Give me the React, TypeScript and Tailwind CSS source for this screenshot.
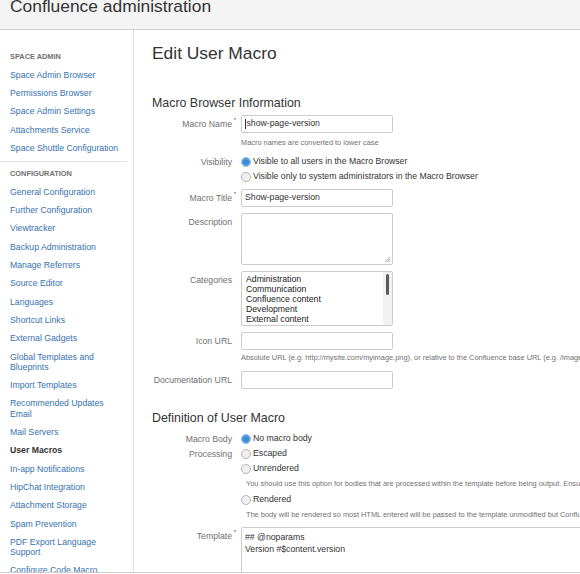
import React from 'react'

const FONT = "font-['Liberation_Sans',Arial,sans-serif]"

const spaceAdmin = [
  'Space Admin Browser',
  'Permissions Browser',
  'Space Admin Settings',
  'Attachments Service',
  'Space Shuttle Configuration',
]

const configuration = [
  'General Configuration',
  'Further Configuration',
  'Viewtracker',
  'Backup Administration',
  'Manage Referrers',
  'Source Editor',
  'Languages',
  'Shortcut Links',
  'External Gadgets',
  'Global Templates and Blueprints',
  'Import Templates',
  'Recommended Updates Email',
  'Mail Servers',
  'User Macros',
  'In-app Notifications',
  'HipChat Integration',
  'Attachment Storage',
  'Spam Prevention',
  'PDF Export Language Support',
  'Configure Code Macro',
]

function NavHeading({ children }: { children: React.ReactNode }) {
  return (
    <div className="py-[4px] text-[7.4px] font-bold uppercase leading-[10.3px] text-[#707070]">
      {children}
    </div>
  )
}

function NavItem({ children, active = false }: { children: React.ReactNode; active?: boolean }) {
  return (
    <a
      href="#"
      className={`block py-[4px] pr-[6px] text-[8.7px] leading-[10.3px] ${
        active ? 'font-bold text-[#333]' : 'text-[#3572b0]'
      }`}
    >
      {children}
    </a>
  )
}

function Label({ children, required = false, top = 'pt-[4.35px]' }: { children: React.ReactNode; required?: boolean; top?: string }) {
  return (
    <div className={`w-[80px] shrink-0 text-right text-[8.7px] leading-[10.3px] text-[#707070] ${top}`}>
      <span className="relative">
        {children}
        {required && (
          <span className="absolute -right-[4px] -top-[2px] text-[6px] leading-none text-[#555]">*</span>
        )}
      </span>
    </div>
  )
}

function Row({ children, className = '' }: { children: React.ReactNode; className?: string }) {
  return <div className={`flex gap-[9px] ${className}`}>{children}</div>
}

function TextBox({ value = '', caret = false }: { value?: string; caret?: boolean }) {
  return (
    <div className="flex h-[18px] w-[152px] items-center rounded-[2px] border border-[#ccc] bg-white pl-[3px] text-[8.7px] text-[#333]">
      {caret && <span className="mr-[0.5px] h-[10px] w-px bg-[#333]" />}
      {value}
    </div>
  )
}

function Help({ children, indent = false }: { children: React.ReactNode; indent?: boolean }) {
  return (
    <div className={`whitespace-nowrap text-[7.4px] leading-[9px] text-[#707070] ${indent ? 'pl-[5px]' : ''}`}>
      {children}
    </div>
  )
}

function Radio({ label, checked = false }: { label: string; checked?: boolean }) {
  return (
    <div className="flex h-[15px] items-center gap-[2px] whitespace-nowrap text-[8.7px] text-[#333]">
      {checked ? (
        <span className="h-[10px] w-[10px] rounded-full border border-[#8fbbe6] bg-[#3b8bd6] shadow-[inset_0_0_0_1px_#6aa8e2]" />
      ) : (
        <span className="h-[10px] w-[10px] rounded-full border border-[#b5b5b5] bg-[#f0f0f0]" />
      )}
      <span>{label}</span>
    </div>
  )
}

function Grip() {
  return (
    <svg className="absolute bottom-[1px] right-[1px]" width="7" height="7" viewBox="0 0 7 7">
      <path d="M6 1L1 6M6 3L3 6M6 5L5 6" stroke="#999" strokeWidth="0.8" />
    </svg>
  )
}

export default function App() {
  const categories = ['Administration', 'Communication', 'Confluence content', 'Development', 'External content', 'Formatting']

  return (
    <div className={`${FONT} h-[574px] w-[580px] overflow-hidden bg-white text-[#333]`}>
      {/* Header */}
      <header className="h-[30px] overflow-hidden border-b border-[#cfcfcf] bg-[#f4f4f4] pl-[10px]">
        <h1 className="-mt-[2.5px] text-[17.4px] leading-[17.4px] text-[#333]">Confluence administration</h1>
      </header>

      <div className="flex h-[543px] border-b border-[#cccccc]">
        {/* Sidebar */}
        <aside className="w-[134px] shrink-0 overflow-hidden border-r border-[#dddddd] pl-[10px] pt-[17.6px]">
          <NavHeading>Space Admin</NavHeading>
          {spaceAdmin.map(i => (
            <NavItem key={i}>{i}</NavItem>
          ))}
          <div className="-ml-[10px] mr-[6px] mb-[2.6px] mt-[3.6px] h-px bg-[#e2e2e2]" />
          <NavHeading>Configuration</NavHeading>
          {configuration.map(i => (
            <NavItem key={i} active={i === 'User Macros'}>
              {i}
            </NavItem>
          ))}
        </aside>

        {/* Main */}
        <main className="flex-1 overflow-hidden pl-[18px] pt-[12.5px]">
          <h2 className="text-[17.4px] leading-[20px] text-[#333]">Edit User Macro</h2>

          <h3 className="mt-[33.5px] text-[12.4px] leading-[15px] text-[#333]">Macro Browser Information</h3>

          <Row className="mt-[4px]">
            <Label required>Macro Name</Label>
            <div>
              <TextBox value="show-page-version" caret />
              <div className="mt-[4.5px]">
                <Help>Macro names are converted to lower case</Help>
              </div>
            </div>
          </Row>

          <Row className="mt-[7.5px]">
            <Label top="pt-[2.85px]">Visibility</Label>
            <div>
              <Radio checked label="Visible to all users in the Macro Browser" />
              <Radio label="Visible only to system administrators in the Macro Browser" />
            </div>
          </Row>

          <Row className="mt-[4.5px]">
            <Label required>Macro Title</Label>
            <TextBox value="Show-page-version" />
          </Row>

          <Row className="mt-[6px]">
            <Label>Description</Label>
            <div className="relative h-[52px] w-[152px] rounded-[2px] border border-[#ccc] bg-white">
              <Grip />
            </div>
          </Row>

          <Row className="mt-[6px]">
            <Label>Categories</Label>
            <div className="relative h-[55px] w-[152px] overflow-hidden rounded-[2px] border border-[#ccc] bg-white">
              <div className="pl-[4px] pt-[3.5px] text-[8.7px] leading-[9.9px] text-[#222]">
                {categories.map(c => (
                  <div key={c}>{c}</div>
                ))}
              </div>
              <div className="absolute bottom-0 right-0 top-0 w-[9px] bg-[#f1f1f1]">
                <div className="ml-[2.5px] mt-[2px] h-[21px] w-[3px] rounded-full bg-[#5a5a5a]" />
              </div>
            </div>
          </Row>

          <Row className="mt-[6px]">
            <Label>Icon URL</Label>
            <div>
              <TextBox />
              <div className="mt-[3.5px]">
                <Help>
                  Absolute URL (e.g. http://mysite.com/myimage.png), or relative to the Confluence base URL (e.g. /images/icons/macro.png)
                </Help>
              </div>
            </div>
          </Row>

          <Row className="mt-[8.5px]">
            <Label>Documentation URL</Label>
            <TextBox />
          </Row>

          <h3 className="mt-[22.5px] text-[12.4px] leading-[15px] text-[#333]">Definition of User Macro</h3>

          <Row className="mt-[5px]">
            <div className="w-[80px] shrink-0 pt-[0.5px] text-right text-[8.7px] leading-[15px] text-[#707070]">
              Macro Body
              <br />
              Processing
            </div>
            <div>
              <Radio checked label="No macro body" />
              <Radio label="Escaped" />
              <Radio label="Unrendered" />
              <div className="mt-[3px]">
                <Help indent>
                  You should use this option for bodies that are processed within the template before being output. Ensure that
                </Help>
              </div>
              <div className="mt-[4px]">
                <Radio label="Rendered" />
              </div>
              <div className="mt-[3px]">
                <Help indent>
                  The body will be rendered so most HTML entered will be passed to the template unmodified but Confluence markup
                </Help>
              </div>
            </div>
          </Row>

          <Row className="mt-[7.5px]">
            <Label required>Template</Label>
            <div className="h-[80px] w-[500px] shrink-0 rounded-[2px] border border-[#ccc] bg-white pl-[3px] pt-[3.5px] text-[8.7px] leading-[12.4px] text-[#333]">
              <div>## @noparams</div>
              <div>Version #$content.version</div>
            </div>
          </Row>
        </main>
      </div>
    </div>
  )
}
